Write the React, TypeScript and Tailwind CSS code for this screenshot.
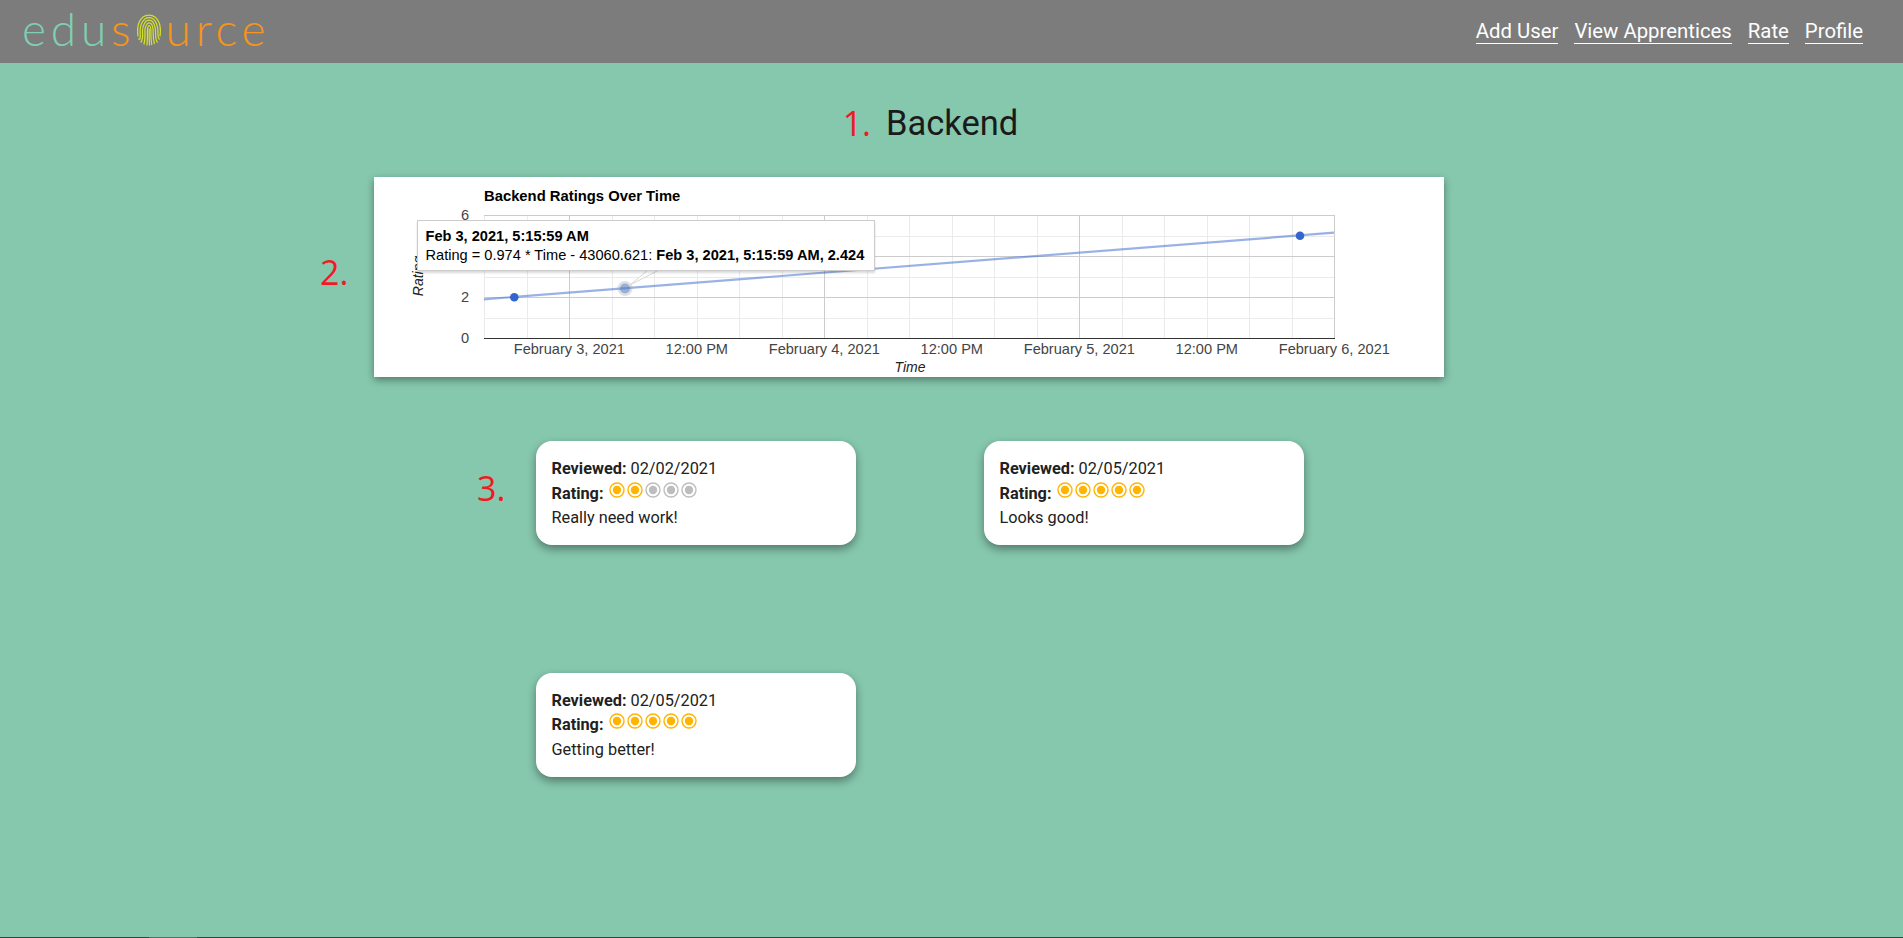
import React from "react";

const xs = Array.from({ length: 21 }, (_, i) => 484.3 - 374 + (i * 255) / 6);
const majorX = [569.3, 824.3, 1079.3, 1334.3].map((v) => v - 374);
const top = 215 - 177;
const bottom = 338 - 177;
const left = 110;
const right = 960;
const yAt = (v: number) => bottom - (v * (bottom - top)) / 6;

function Fingerprint() {
  const arcs = [
    "M1 22 C0.3 17 0.5 12 2 8.5 C4 3.5 8 1 12 1 C16 1 20 3.5 22 8.5 C23.5 12 23.7 17 23 22",
    "M1.8 25 C3 26 3.4 24 3.2 21 C2.8 15 3.4 11.5 4.8 9 C6.6 5.4 9 3.6 12 3.6 C15 3.6 17.6 5.4 19.2 9 C20.6 12 21 16 21 20 C21 23 21.5 25 22.5 25",
    "M4 28 C5.6 26 5.8 22 5.5 18 C5.4 14.5 6 12 7.2 10 C8.4 7.6 10 6.2 12 6.2 C14 6.2 15.8 7.6 17 10 C18.2 12.4 18.6 16 18.6 20 C18.6 24 19 26.5 20.2 28",
    "M7 30 C7.8 27 8.1 22 7.9 17.5 C7.8 14.5 8.4 12.4 9.4 11 C10.1 9.8 11 8.9 12.2 8.9 C13.6 8.9 14.6 10 15.3 11.6 C16 13.5 16.2 17 16.2 20 C16.2 24 16.6 27 17.4 29.5",
    "M10 31 C10.4 27 10.6 22 10.4 17.5 C10.3 14.5 11 11.6 12.2 11.6 C13.4 11.6 13.9 14 13.9 17.5 C13.9 22 14 27 14.8 30.5",
    "M12.2 15 C12.1 20 12.1 26 12.6 31",
  ];
  return (
    <svg width="24" height="32" viewBox="0 0 24 32" fill="none" stroke="#d2e02a" strokeWidth="1.25" strokeLinecap="round">
      {arcs.map((d) => (
        <path key={d} d={d} />
      ))}
    </svg>
  );
}

function Logo() {
  const letter = "[font-family:Lato,sans-serif] font-light text-[46px] leading-none";
  return (
    <div className="ml-[22px] flex items-center h-[63px] -mt-[3px]">
      <span className={`${letter} text-[#80cfb3] tracking-[4.8px]`}>edu</span>
      <span className={`${letter} text-[#f7941d]`}>s</span>
      <span className="ml-[6px] mr-[5px] mt-[3px]">
        <Fingerprint />
      </span>
      <span className={`${letter} text-[#f7941d] tracking-[4.8px]`}>urce</span>
    </div>
  );
}

function Dot({ on }: { on: boolean }) {
  const c = on ? "#ffb400" : "#bdbdbd";
  return (
    <svg width="18" height="18" viewBox="0 0 18 18" className="block">
      <circle cx="9" cy="9" r="7" fill="none" stroke={c} strokeWidth="1.4" />
      <circle cx="9" cy="9" r="4.2" fill={c} />
    </svg>
  );
}

function Review({ date, n, text }: { date: string; n: number; text: string }) {
  return (
    <div className="w-[320px] h-[104.4px] bg-white rounded-[16px] shadow-[0_4px_10px_rgba(0,0,0,0.4)] pl-[15.5px] pt-[16px] text-[16.3px] leading-[24.5px] text-[#212121]">
      <div>
        <b className="font-bold">Reviewed:</b> {date}
      </div>
      <div className="flex items-start">
        <b className="font-bold">Rating:</b>
        <span className="flex ml-[5px] -mt-[1px]">
          {[0, 1, 2, 3, 4].map((i) => (
            <Dot key={i} on={i < n} />
          ))}
        </span>
      </div>
      <div>{text}</div>
    </div>
  );
}

function Chart() {
  return (
    <div className="relative w-[1070px] h-[200px] bg-white shadow-[0_3px_8px_rgba(0,0,0,0.4)]">
      <svg width="1070" height="200" className="block [font-family:'Liberation_Sans',Arial,sans-serif]">
        <text x={left} y="24" fontSize="14.8" fontWeight="700" fill="#000">
          Backend Ratings Over Time
        </text>
        {xs.map((x) => (
          <line key={x} x1={Math.round(x) + 0.5} x2={Math.round(x) + 0.5} y1={top} y2={bottom} stroke="#ebebeb" />
        ))}
        {[1, 3, 5].map((v) => (
          <line key={v} x1={left} x2={right} y1={Math.round(yAt(v)) + 0.5} y2={Math.round(yAt(v)) + 0.5} stroke="#ebebeb" />
        ))}
        {[2, 4, 6].map((v) => (
          <line key={v} x1={left} x2={right} y1={Math.round(yAt(v)) + 0.5} y2={Math.round(yAt(v)) + 0.5} stroke="#cccccc" />
        ))}
        {majorX.map((x) => (
          <line key={x} x1={Math.round(x) + 0.5} x2={Math.round(x) + 0.5} y1={top} y2={bottom} stroke="#cccccc" />
        ))}
        <line x1={left} x2={right + 1} y1={bottom + 0.5} y2={bottom + 0.5} stroke="#333333" />
        {[6, 2, 0].map((v) => (
          <text key={v} x="95" y={yAt(v) + 5} fontSize="14.6" textAnchor="end" fill="#444">
            {v}
          </text>
        ))}
        {[
          ["February 3, 2021", 195.3],
          ["12:00 PM", 322.8],
          ["February 4, 2021", 450.3],
          ["12:00 PM", 577.8],
          ["February 5, 2021", 705.3],
          ["12:00 PM", 832.8],
          ["February 6, 2021", 960.3],
        ].map(([t, x]) => (
          <text key={`${t}${x}`} x={x} y="177" fontSize="14.6" textAnchor="middle" fill="#444">
            {t}
          </text>
        ))}
        <text x="536" y="195" fontSize="14" fontStyle="italic" textAnchor="middle" fill="#222">
          Time
        </text>
        <text transform="translate(49 99) rotate(-90)" fontSize="14" fontStyle="italic" textAnchor="middle" fill="#222">
          Rating
        </text>
        <line x1={left} y1="122.3" x2={right} y2="55.7" stroke="#3366cc" strokeOpacity="0.5" strokeWidth="2.2" />
        <circle cx="251" cy="111.5" r="7.5" fill="#999" fillOpacity="0.3" />
        <circle cx="251" cy="111.5" r="5" fill="#3366cc" fillOpacity="0.4" />
        <circle cx="140.3" cy="120.3" r="4.3" fill="#3366cc" />
        <circle cx="926" cy="58.7" r="4.3" fill="#3366cc" />
      </svg>
      <svg width="40" height="22" className="absolute left-[250px] top-[92px]">
        <path d="M6 16 L24 0 L35 0 Z" fill="#fff" />
        <path d="M6 16 L24 1 M6 16 L35 1" stroke="#d8d8d8" fill="none" />
      </svg>
      <div className="absolute left-[43px] top-[43px] w-[458px] h-[51px] bg-white border border-[#cccccc] shadow-[0_2px_2px_rgba(0,0,0,0.15)] pl-[7.5px] pt-[6px] [font-family:'Liberation_Sans',Arial,sans-serif] text-[14.6px] leading-[19px] text-black whitespace-nowrap">
        <div className="font-bold">Feb 3, 2021, 5:15:59 AM</div>
        <div>
          Rating = 0.974 * Time - 43060.621: <b>Feb 3, 2021, 5:15:59 AM, 2.424</b>
        </div>
      </div>
    </div>
  );
}

export default function App() {
  const num = "[font-family:'Open_Sans',sans-serif] text-[#ed1c24] text-[34px] leading-none";
  return (
    <div className="h-screen flex flex-col bg-[#86c8ae] [font-family:Roboto,sans-serif] overflow-hidden">
      <header className="h-[63px] shrink-0 bg-[#7c7c7c] flex items-start justify-between pr-[40px]">
        <Logo />
        <nav className="flex gap-[16px] pt-[18px] text-[20.35px] leading-[27px] text-white">
          {["Add User", "View Apprentices", "Rate", "Profile"].map((t) => (
            <a key={t} className="border-b border-white h-[26px]">
              {t}
            </a>
          ))}
        </nav>
      </header>

      <main className="flex-1">
        <div className="flex justify-center items-center gap-[15px] pt-[5px] pr-[42px] h-[114px]">
          <span className={num}>1.</span>
          <h1 className="text-[34.5px] leading-[38px] text-[#1a1a1a]">Backend</h1>
        </div>

        <div className="flex pl-[320px]">
          <span className={`${num} w-[54px] pt-[78px]`}>2.</span>
          <Chart />
        </div>

        <div className="flex pl-[477px] pt-[64px]">
          <span className={`${num} w-[59px] pt-[30px]`}>3.</span>
          <div className="grid grid-cols-[320px_320px] gap-x-[128px] gap-y-[127.6px]">
            <Review date="02/02/2021" n={2} text="Really need work!" />
            <Review date="02/05/2021" n={5} text="Looks good!" />
            <Review date="02/05/2021" n={5} text="Getting better!" />
          </div>
        </div>
      </main>

      <div className="h-px shrink-0 bg-[#3c3f3e]">
        <div className="ml-[149px] w-[48px] h-px bg-[#666666]" />
      </div>
    </div>
  );
}
